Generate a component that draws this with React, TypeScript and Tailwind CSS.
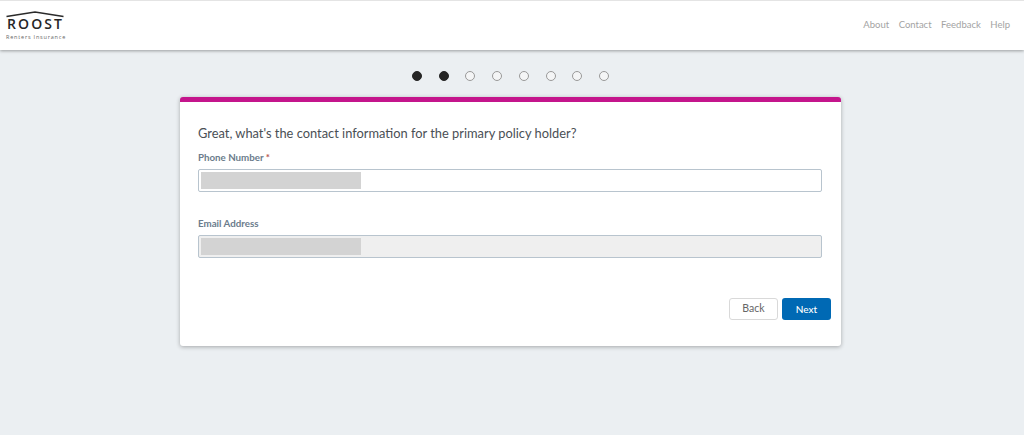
const steps = [true, true, false, false, false, false, false, false];
const links = ["About", "Contact", "Feedback", "Help"];

function Logo() {
  return (
    <div className="flex w-[58px] flex-col">
      <svg width="58" height="8" viewBox="0 0 58 8" className="block" fill="none">
        <path d="M0.5 6.5 L29 2 L57.5 6.5" stroke="#2a2a2a" strokeWidth="1.4" />
      </svg>
      <span className="-mt-[1px] pl-[1px] text-[14px] leading-[13px] font-semibold tracking-[2.1px] text-[#262626] font-['Open_Sans',sans-serif]">
        ROOST
      </span>
      <span className="mt-[4px] text-[5.5px] leading-[7px] tracking-[0.8px] whitespace-nowrap text-[#666] font-['Open_Sans',sans-serif]">
        Renters Insurance
      </span>
    </div>
  );
}

function Field({ label, required, disabled }: { label: string; required?: boolean; disabled?: boolean }) {
  return (
    <div>
      <label className="block text-[9.75px] leading-[14px] font-bold text-[#6b7c8c]">
        {label}
        {required && <span className="text-[#b5534f]"> *</span>}
      </label>
      <div
        className={`mt-[5px] h-[23px] rounded-[2px] border border-[#b8c4ce] py-[2px] pl-[2px] ${
          disabled ? "bg-[#efefef]" : "bg-white"
        }`}
      >
        <div className="h-full w-[160px] bg-[#d3d3d3]" />
      </div>
    </div>
  );
}

export default function App() {
  return (
    <div className="flex h-[435px] w-[1024px] flex-col overflow-hidden bg-[#ebeff2] font-['Lato',sans-serif]">
      <header className="flex h-[50px] shrink-0 items-center justify-between border-t border-[#e4e4e4] bg-white pr-[14px] pl-[6px] shadow-[0_1px_3px_rgba(0,0,0,0.35)]">
        <Logo />
        <nav className="flex gap-[9.5px] text-[9.5px] text-[#a3a3a3]">
          {links.map((l) => (
            <a key={l}>{l}</a>
          ))}
        </nav>
      </header>

      <div className="pr-[3px]">
        <div className="mt-[21px] flex justify-center gap-[16.7px]">
          {steps.map((done, i) => (
            <span
              key={i}
              className={`h-[10px] w-[10px] rounded-full border ${
                done ? "border-[#262626] bg-[#262626]" : "border-[#999999] bg-[#f4f5f6]"
              }`}
            />
          ))}
        </div>

        <main className="mx-auto mt-[16px] h-[249px] w-[661px] rounded-[3px] border-t-[5px] border-[#c4158c] bg-white shadow-[0_1px_4px_rgba(0,0,0,0.3)]">
          <div className="flex h-full flex-col pt-[23px] pr-[10px] pb-[26px] pl-[18px]">
            <p className="text-[12.85px] leading-[16px] text-[#4a4f55]">
              Great, what's the contact information for the primary policy holder?
            </p>
            <div className="mt-[9px] flex flex-col gap-[24px] pr-[9px]">
              <Field label="Phone Number" required />
              <Field label="Email Address" disabled />
            </div>
            <div className="mt-auto flex justify-end gap-[4px]">
              <button className="h-[22px] w-[49px] rounded-[3px] border border-[#d9d9d9] bg-white text-[10.5px] text-[#666]">
                Back
              </button>
              <button className="h-[22px] w-[49px] rounded-[3px] bg-[#0069b4] text-[10px] font-medium text-white">
                Next
              </button>
            </div>
          </div>
        </main>
      </div>
    </div>
  );
}
